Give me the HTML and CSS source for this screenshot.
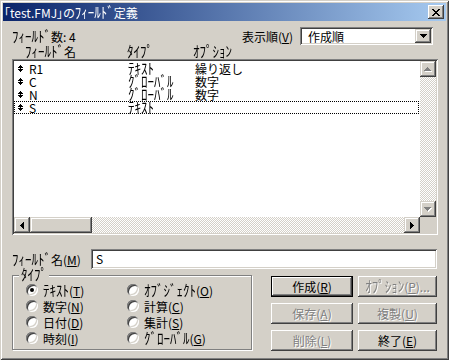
FILE: index.html
```html
<!DOCTYPE html>
<html lang="ja">
<head>
    <meta charset="UTF-8">
    <meta name="viewport" content="width=device-width, initial-scale=1.0">
    <title>ﾌｨｰﾙﾄﾞ定義</title>
    <link rel="stylesheet" href="styles.css">
</head>
<body>
    <div class="window">
        <div class="titlebar">
            <span class="title">「test.FMJ」の<span class="hw">ﾌｨｰﾙﾄﾞ</span>定義</span>
            <span class="close-btn">
                <svg width="8" height="7" viewBox="0 0 8 7"><path d="M0 0h2v1H0zM6 0h2v1H6zM1 1h2v1H1zM5 1h2v1H5zM2 2h4v1H2zM3 3h2v1H3zM2 4h4v1H2zM1 5h2v1H1zM5 5h2v1H5zM0 6h2v1H0zM6 6h2v1H6z" fill="#000"/></svg>
            </span>
        </div>

        <div class="content">
            <div class="top-row">
                <span class="count"><span class="hw">ﾌｨｰﾙﾄﾞ</span>数: 4</span>
                <span class="sort-label">表示順(<u>V</u>)</span>
                <div class="combo">
                    <span class="combo-text">作成順</span>
                    <span class="combo-btn">
                        <svg width="7" height="4" viewBox="0 0 7 4"><path d="M0 0h7v1H0zM1 1h5v1H1zM2 2h3v1H2zM3 3h1v1H3z" fill="#000"/></svg>
                    </span>
                </div>
            </div>

            <div class="headers">
                <span><span class="hw">ﾌｨｰﾙﾄﾞ</span>名</span>
                <span><span class="hw">ﾀｲﾌﾟ</span></span>
                <span><span class="hw">ｵﾌﾟｼｮﾝ</span></span>
            </div>

            <div class="listbox">
                <div class="list-area">
                    <div class="row">
                        <svg class="move" width="5" height="7" viewBox="0 0 5 7"><path d="M2 0h1v1H2zM1 1h3v1H1zM0 2h5v1H0zM2 3h1v1H2zM0 4h5v1H0zM1 5h3v1H1zM2 6h1v1H2z" fill="#000"/></svg>
                        <span>R1</span><span><span class="hw">ﾃｷｽﾄ</span></span><span>繰り返し</span>
                    </div>
                    <div class="row">
                        <svg class="move" width="5" height="7" viewBox="0 0 5 7"><path d="M2 0h1v1H2zM1 1h3v1H1zM0 2h5v1H0zM2 3h1v1H2zM0 4h5v1H0zM1 5h3v1H1zM2 6h1v1H2z" fill="#000"/></svg>
                        <span>C</span><span><span class="hw">ｸﾞﾛｰﾊﾞﾙ</span></span><span>数字</span>
                    </div>
                    <div class="row">
                        <svg class="move" width="5" height="7" viewBox="0 0 5 7"><path d="M2 0h1v1H2zM1 1h3v1H1zM0 2h5v1H0zM2 3h1v1H2zM0 4h5v1H0zM1 5h3v1H1zM2 6h1v1H2z" fill="#000"/></svg>
                        <span>N</span><span><span class="hw">ｸﾞﾛｰﾊﾞﾙ</span></span><span>数字</span>
                    </div>
                    <div class="row focused">
                        <svg class="move" width="5" height="7" viewBox="0 0 5 7"><path d="M2 0h1v1H2zM1 1h3v1H1zM0 2h5v1H0zM2 3h1v1H2zM0 4h5v1H0zM1 5h3v1H1zM2 6h1v1H2z" fill="#000"/></svg>
                        <span>S</span><span><span class="hw">ﾃｷｽﾄ</span></span><span></span>
                    </div>
                </div>

                <div class="vscroll">
                    <span class="sb-btn">
                        <svg width="8" height="5" viewBox="0 0 8 5"><path d="M4 1h1v1H4zM3 2h3v1H3zM2 3h5v1H2zM1 4h7v1H1z" fill="#fff"/><path d="M3 0h1v1H3zM2 1h3v1H2zM1 2h5v1H1zM0 3h7v1H0z" fill="#808080"/></svg>
                    </span>
                    <span class="sb-btn">
                        <svg width="8" height="5" viewBox="0 0 8 5"><path d="M1 1h7v1H1zM2 2h5v1H2zM3 3h3v1H3zM4 4h1v1H4z" fill="#fff"/><path d="M0 0h7v1H0zM1 1h5v1H1zM2 2h3v1H2zM3 3h1v1H3z" fill="#808080"/></svg>
                    </span>
                </div>

                <div class="hscroll">
                    <span class="sb-btn">
                        <svg width="4" height="7" viewBox="0 0 4 7"><path d="M3 0h1v7H3zM2 1h1v5H2zM1 2h1v3H1zM0 3h1v1H0z" fill="#000"/></svg>
                    </span>
                    <span class="thumb"></span>
                    <span class="track"></span>
                    <span class="sb-btn">
                        <svg width="4" height="7" viewBox="0 0 4 7"><path d="M0 0h1v7H0zM1 1h1v5H1zM2 2h1v3H2zM3 3h1v1H3z" fill="#000"/></svg>
                    </span>
                </div>

                <div class="corner"></div>
            </div>

            <div class="name-row">
                <span class="name-label"><span class="hw">ﾌｨｰﾙﾄﾞ</span>名(<u>M</u>)</span>
                <div class="textfield">S</div>
            </div>

            <div class="bottom">
                <fieldset class="types">
                    <legend><span class="hw">ﾀｲﾌﾟ</span></legend>
                    <div class="radio-grid">
                        <label class="option"><span class="radio checked"></span><span><span class="hw">ﾃｷｽﾄ</span>(<u>T</u>)</span></label>
                        <label class="option"><span class="radio"></span><span><span class="hw">ｵﾌﾞｼﾞｪｸﾄ</span>(<u>O</u>)</span></label>
                        <label class="option"><span class="radio"></span><span>数字(<u>N</u>)</span></label>
                        <label class="option"><span class="radio"></span><span>計算(<u>C</u>)</span></label>
                        <label class="option"><span class="radio"></span><span>日付(<u>D</u>)</span></label>
                        <label class="option"><span class="radio"></span><span>集計(<u>S</u>)</span></label>
                        <label class="option"><span class="radio"></span><span>時刻(<u>I</u>)</span></label>
                        <label class="option"><span class="radio"></span><span><span class="hw">ｸﾞﾛｰﾊﾞﾙ</span>(<u>G</u>)</span></label>
                    </div>
                </fieldset>

                <div class="buttons">
                    <button class="btn default">作成(<u>R</u>)</button>
                    <button class="btn" disabled><span class="hw">ｵﾌﾟｼｮﾝ</span>(<u>P</u>)...</button>
                    <button class="btn" disabled>保存(<u>A</u>)</button>
                    <button class="btn" disabled>複製(<u>U</u>)</button>
                    <button class="btn" disabled>削除(<u>L</u>)</button>
                    <button class="btn">終了(<u>E</u>)</button>
                </div>
            </div>
        </div>
    </div>
</body>
</html>
```

FILE: styles.css
```css
* {
    box-sizing: border-box;
}

body {
    margin: 0;
    background-color: #d4d0c8;
    font: 12px/13px "Noto Sans CJK JP", "Liberation Sans", sans-serif;
    color: #000;
}

u {
    text-underline-offset: 1px;
}

/* katakana demi-chasse : etires en hauteur comme dans la police systeme */
.hw {
    display: inline-block;
    font-size: 13px;
    transform: scaleY(1.15);
    transform-origin: 50% 80%;
}

/* fenetre */
.window {
    width: 449px;
    height: 360px;
    padding: 3px;
    background-color: #d4d0c8;
    box-shadow: inset 1px 1px #d4d0c8, inset -1px -1px #404040,
                inset 2px 2px #fff, inset -2px -2px #808080;
}

.titlebar {
    height: 18px;
    display: flex;
    align-items: center;
    justify-content: space-between;
    padding: 0 2px 0 1px;
    background: linear-gradient(to right, #0a246a, #a6caf0);
    color: #fff;
}

.title {
    font-feature-settings: "palt";
}

.close-btn {
    width: 16px;
    height: 14px;
    display: flex;
    align-items: center;
    justify-content: center;
    background-color: #d4d0c8;
    box-shadow: inset -1px -1px #404040, inset 1px 1px #fff,
                inset -2px -2px #808080;
}

.content {
    padding: 6px 8px 0 9px;
}

.top-row {
    height: 18px;
    display: flex;
    align-items: center;
}

.sort-label {
    margin-left: auto;
    margin-right: 7px;
}

.combo {
    width: 133px;
    height: 18px;
    margin-right: 5px;
    padding: 2px;
    display: flex;
    align-items: center;
    background-color: #fff;
    box-shadow: inset 1px 1px #808080, inset -1px -1px #fff,
                inset 2px 2px #404040, inset -2px -2px #d4d0c8;
}

.combo-text {
    flex: 1;
    padding-left: 6px;
}

.combo-btn, .sb-btn {
    width: 16px;
    height: 14px;
    display: flex;
    align-items: center;
    justify-content: center;
    background-color: #d4d0c8;
    box-shadow: inset -1px -1px #404040, inset 1px 1px #d4d0c8,
                inset -2px -2px #808080, inset 2px 2px #fff;
}

.headers {
    height: 14px;
    line-height: 14px;
    display: grid;
    grid-template-columns: 102px 66px 1fr;
    padding-left: 13px;
}

/* liste des champs */
.listbox {
    width: 426px;
    height: 176px;
    padding: 2px;
    display: grid;
    grid-template-columns: 1fr 16px;
    grid-template-rows: 1fr 16px;
    background-color: #fff;
    box-shadow: inset 1px 1px #808080, inset -1px -1px #fff,
                inset 2px 2px #404040, inset -2px -2px #d4d0c8;
}

.list-area {
    padding-top: 1px;
    background-color: #fff;
}

.row {
    height: 13px;
    display: grid;
    grid-template-columns: 11px 99px 67px 1fr;
    align-items: center;
    padding-left: 4px;
}

.row.focused {
    outline: 1px dotted #000;
    outline-offset: -1px;
    margin-right: 1px;
}

.vscroll, .hscroll .track {
    background: repeating-conic-gradient(#fff 0 25%, #d4d0c8 0 50%) 0 0 / 2px 2px;
}

.vscroll {
    display: flex;
    flex-direction: column;
    justify-content: space-between;
}

.vscroll .sb-btn, .hscroll .sb-btn {
    height: 16px;
}

.hscroll {
    display: flex;
}

.thumb {
    width: 62px;
    background-color: #d4d0c8;
    box-shadow: inset -1px -1px #404040, inset 1px 1px #d4d0c8,
                inset -2px -2px #808080, inset 2px 2px #fff;
}

.track {
    flex: 1;
}

.corner {
    background-color: #d4d0c8;
}

.name-row {
    margin-top: 14px;
    display: flex;
    align-items: center;
}

.name-label {
    width: 79px;
}

.textfield {
    width: 346px;
    height: 20px;
    padding: 3px 0 0 5px;
    background-color: #fff;
    box-shadow: inset 1px 1px #808080, inset -1px -1px #fff,
                inset 2px 2px #404040, inset -2px -2px #d4d0c8;
}

/* bas : types et boutons */
.bottom {
    display: flex;
    align-items: flex-start;
    gap: 19px;
}

.types {
    width: 240px;
    margin: 0;
    padding: 0 0 3px 0;
    border: 1px solid #808080;
    box-shadow: inset 1px 1px #fff, 1px 1px #fff;
}

.types legend {
    margin-left: 6px;
    padding: 0 2px;
    line-height: 12px;
    background-color: #d4d0c8;
}

.radio-grid {
    display: grid;
    grid-template-columns: 101px 1fr;
    grid-auto-rows: 16px;
    padding: 1px 0 0 13px;
}

.option {
    display: flex;
    align-items: center;
    gap: 5px;
}

.radio {
    position: relative;
    width: 12px;
    height: 12px;
    border-radius: 50%;
    background-color: #fff;
    box-shadow: inset 1px 1px #808080, inset -1px -1px #fff,
                inset 2px 2px #404040, inset -2px -2px #d4d0c8;
}

.radio.checked::after {
    content: "";
    position: absolute;
    left: 4px;
    top: 4px;
    width: 4px;
    height: 4px;
    border-radius: 50%;
    background-color: #000;
}

.buttons {
    margin-top: 7px;
    display: grid;
    grid-template-columns: 82px 79px;
    grid-auto-rows: 21px;
    gap: 6px 5px;
}

.btn {
    padding: 0;
    border: none;
    font: inherit;
    color: #000;
    background-color: #d4d0c8;
    box-shadow: inset -1px -1px #404040, inset 1px 1px #fff,
                inset -2px -2px #808080, inset 2px 2px #d4d0c8;
}

.btn.default {
    box-shadow: inset 0 0 0 1px #000, inset -2px -2px #404040, inset 2px 2px #fff,
                inset -3px -3px #808080;
}

.btn:disabled {
    color: #808080;
    text-shadow: 1px 1px 0 #fff;
}
```
